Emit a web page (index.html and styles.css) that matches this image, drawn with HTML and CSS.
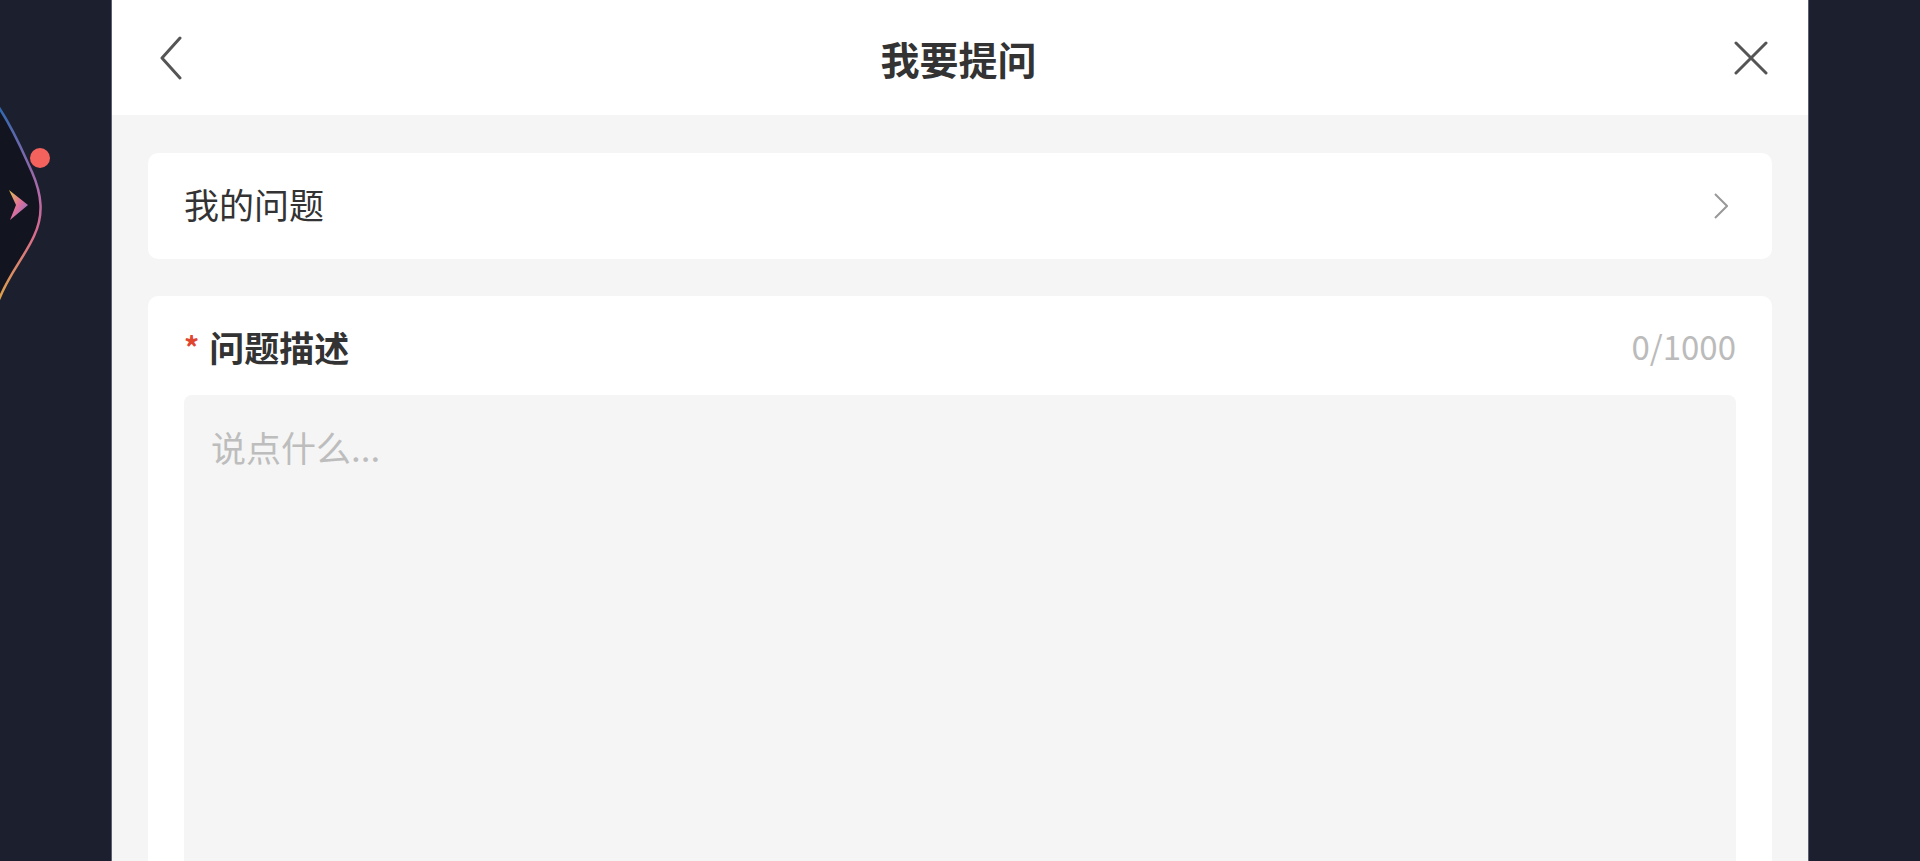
FILE: index.html
```html
<!DOCTYPE html>
<html lang="zh-CN">
<head>
    <meta charset="UTF-8">
    <meta name="viewport" content="width=device-width, initial-scale=1.0">
    <title>我要提问</title>
    <link rel="stylesheet" href="styles.css">
</head>
<body>

    <!-- Left rail with the player's wave decoration -->
    <aside class="side side-left">
        <svg class="wave" width="112" height="320" viewBox="0 0 112 320">
            <defs>
                <linearGradient id="waveLine" x1="0" y1="0" x2="0" y2="1">
                    <stop offset="0" stop-color="#2c68b0"/>
                    <stop offset="0.45" stop-color="#b56aa8"/>
                    <stop offset="0.65" stop-color="#d96a8e"/>
                    <stop offset="1" stop-color="#dca544"/>
                </linearGradient>
                <linearGradient id="arrowFill" x1="0" y1="0" x2="1" y2="1">
                    <stop offset="0" stop-color="#e0c24c"/>
                    <stop offset="0.5" stop-color="#e0709a"/>
                    <stop offset="1" stop-color="#6f6fd4"/>
                </linearGradient>
            </defs>
            <path class="wave-fill" d="M0,108 C14,130 22,150 32,172 C42,195 44,215 34,236 C24,258 8,275 0,300 Z"/>
            <path class="wave-line" d="M-2,106 C14,130 22,150 32,172 C42,195 44,215 34,236 C24,258 8,275 -2,302"/>
            <circle cx="40" cy="158" r="10" fill="#f4625e"/>
            <polygon points="9,190 28,205 10,220 16,205" fill="url(#arrowFill)"/>
        </svg>
    </aside>

    <main class="panel">
        <!-- Header -->
        <header class="panel-header">
            <button class="icon-btn">
                <svg width="24" height="44" viewBox="0 0 24 44">
                    <polyline points="21,2 3,22 21,42" fill="none" stroke="#555" stroke-width="3" stroke-linecap="round" stroke-linejoin="round"/>
                </svg>
            </button>
            <h1 class="panel-title">我要提问</h1>
            <button class="icon-btn">
                <svg width="34" height="34" viewBox="0 0 34 34">
                    <line x1="2" y1="2" x2="32" y2="32" stroke="#555" stroke-width="3" stroke-linecap="round"/>
                    <line x1="32" y1="2" x2="2" y2="32" stroke="#555" stroke-width="3" stroke-linecap="round"/>
                </svg>
            </button>
        </header>

        <div class="panel-body">
            <!-- My questions link -->
            <div class="card link-card">
                <span class="link-text">我的问题</span>
                <svg width="14" height="26" viewBox="0 0 14 26">
                    <polyline points="1,1 13,13 1,25" fill="none" stroke="#999" stroke-width="2"/>
                </svg>
            </div>

            <!-- Question description -->
            <div class="card form-card">
                <div class="form-head">
                    <span class="label"><span class="required">*</span>问题描述</span>
                    <span class="counter">0/1000</span>
                </div>
                <textarea class="desc-input" placeholder="说点什么..."></textarea>
            </div>
        </div>
    </main>

    <aside class="side side-right"></aside>

</body>
</html>
```

FILE: styles.css
```css
/* Global Styles */
* {
    margin: 0;
    padding: 0;
    box-sizing: border-box;
}

body {
    font-family: "Noto Sans CJK SC", "Noto Sans", sans-serif;
    background-color: #1c1f2e;
    height: 861px;
    overflow: hidden;
    display: flex;
}

/* Side rails */
.side {
    width: 111px;
    flex-shrink: 0;
    background-color: #1c1f2e;
}

.wave {
    display: block;
}

.wave-fill {
    fill: #12141f;
}

.wave-line {
    fill: none;
    stroke: url(#waveLine);
    stroke-width: 2.5;
}

/* Panel */
.panel {
    width: 1698px;
    flex-shrink: 0;
    background-color: #f5f5f5;
    border-left: 1px solid #5c6072;
    border-right: 1px solid #5c6072;
    display: flex;
    flex-direction: column;
}

.panel-header {
    height: 115px;
    background-color: #ffffff;
    display: flex;
    align-items: center;
    justify-content: space-between;
    padding: 0 40px 0 47px;
}

.icon-btn {
    background: none;
    border: none;
    display: flex;
    align-items: center;
    cursor: pointer;
}

.panel-title {
    font-size: 39px;
    font-weight: 700;
    color: #333333;
}

.panel-body {
    flex: 1;
    padding: 38px 36px 0;
    display: flex;
    flex-direction: column;
    gap: 37px;
}

/* Cards */
.card {
    background-color: #ffffff;
    border-radius: 10px;
}

.link-card {
    height: 106px;
    display: flex;
    align-items: center;
    justify-content: space-between;
    padding: 0 44px 5px 36px;
}

.link-card svg {
    margin-top: 4px;
}

.link-text {
    font-size: 35px;
    color: #333333;
}

.form-card {
    flex: 1;
    padding: 33px 36px 0;
    border-radius: 10px 10px 0 0;
    display: flex;
    flex-direction: column;
}

.form-head {
    height: 34px;
    display: flex;
    align-items: center;
    justify-content: space-between;
    margin-bottom: 32px;
}

.label {
    font-size: 35px;
    font-weight: 700;
    color: #333333;
    display: flex;
    align-items: center;
}

.required {
    font-size: 30px;
    color: #e04530;
    margin-right: 10px;
    line-height: 1;
}

.counter {
    font-size: 33px;
    color: #bbbbbb;
}

.desc-input {
    flex: 1;
    width: 100%;
    border: none;
    outline: none;
    resize: none;
    border-radius: 8px 8px 0 0;
    background-color: #f5f5f5;
    padding: 27px 27px;
    font-family: inherit;
    font-size: 35px;
    line-height: 1.4;
    color: #333333;
}

.desc-input::placeholder {
    color: #bdbdbd;
}
```
